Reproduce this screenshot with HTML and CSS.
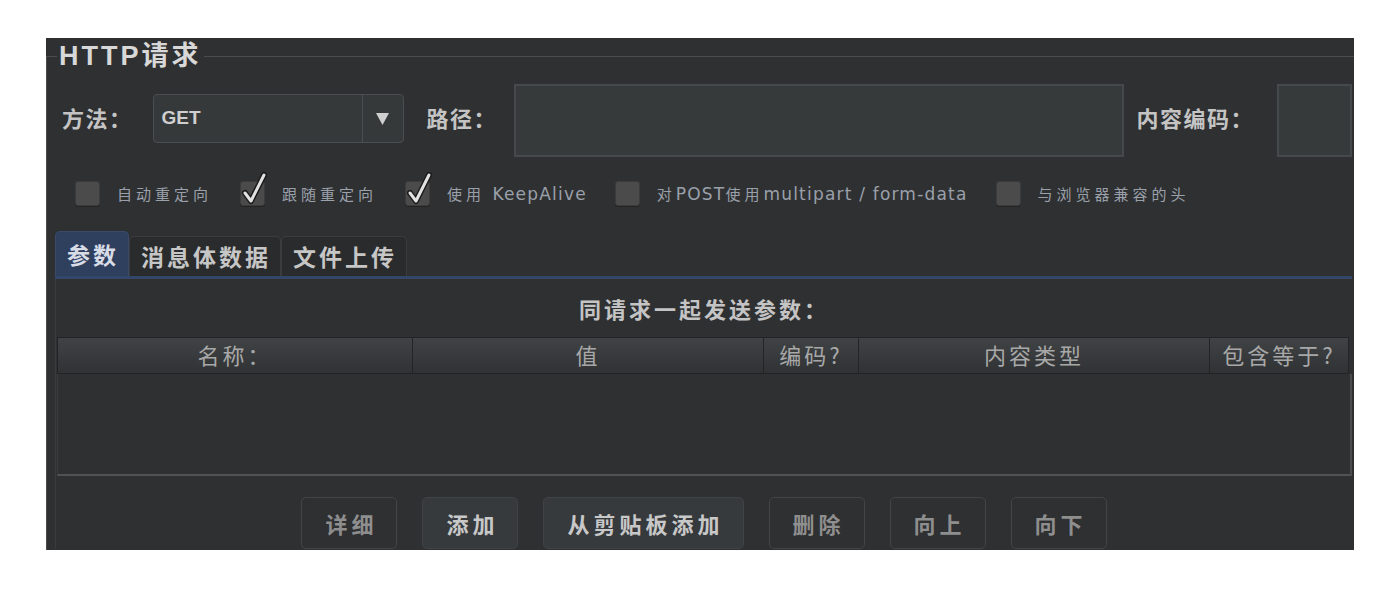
FILE: index.html
```html
<!DOCTYPE html>
<html lang="zh-CN">
<head>
<meta charset="utf-8">
<title>HTTP请求</title>
<link rel="stylesheet" href="styles.css">
</head>
<body>
<div class="page">
  <div class="panel">
    <fieldset class="group">
      <legend class="group-title">HTTP请求</legend>
      <div class="row-top">
        <span class="lbl">方法：</span>
        <div class="combo">
          <span class="combo-val">GET</span>
          <span class="combo-btn"><svg width="13" height="12" viewBox="0 0 13 12"><path d="M0 0 H13 L6.5 12 Z" fill="#cfcfcf"/></svg></span>
        </div>
        <span class="lbl lbl-path">路径：</span>
        <div class="field field-path"></div>
        <span class="lbl lbl-enc">内容编码：</span>
        <div class="field field-enc"></div>
      </div>
      <div class="row-checks">
        <label class="chk"><span class="box"></span><span class="chk-txt">自动重定向</span></label>
        <label class="chk"><span class="box"><svg width="30" height="36" viewBox="0 0 30 36"><path d="M6 22 L12 30 L25 4" fill="none" stroke="#1b1b1b" stroke-width="6" stroke-linecap="round" stroke-linejoin="round"/><path d="M6 22 L12 30 L25 4" fill="none" stroke="#e2e2e2" stroke-width="3" stroke-linecap="round" stroke-linejoin="round"/></svg></span><span class="chk-txt">跟随重定向</span></label>
        <label class="chk"><span class="box"><svg width="30" height="36" viewBox="0 0 30 36"><path d="M6 22 L12 30 L25 4" fill="none" stroke="#1b1b1b" stroke-width="6" stroke-linecap="round" stroke-linejoin="round"/><path d="M6 22 L12 30 L25 4" fill="none" stroke="#e2e2e2" stroke-width="3" stroke-linecap="round" stroke-linejoin="round"/></svg></span><span class="chk-txt">使用 <span class="en">KeepAlive</span></span></label>
        <label class="chk"><span class="box"></span><span class="chk-txt">对<span class="en">POST</span>使用<span class="en">multipart / form-data</span></span></label>
        <label class="chk"><span class="box"></span><span class="chk-txt">与浏览器兼容的头</span></label>
      </div>
      <div class="tabs">
        <div class="tab on">参数</div>
        <div class="tab">消息体数据</div>
        <div class="tab">文件上传</div>
      </div>
      <div class="tab-body">
        <div class="params-title">同请求一起发送参数：</div>
        <div class="table">
          <div class="thead">
            <div class="th">名称：</div>
            <div class="th">值</div>
            <div class="th">编码?</div>
            <div class="th">内容类型</div>
            <div class="th">包含等于?</div>
          </div>
          <div class="tbody"></div>
        </div>
        <div class="buttons">
          <div class="btn">详细</div>
          <div class="btn on">添加</div>
          <div class="btn on">从剪贴板添加</div>
          <div class="btn">删除</div>
          <div class="btn">向上</div>
          <div class="btn">向下</div>
        </div>
      </div>
    </fieldset>
  </div>
</div>
</body>
</html>
```

FILE: styles.css
```css
body {
  margin: 0;
  background: #ffffff;
  font-family: "Noto Sans CJK SC", sans-serif;
}

.page {
  padding: 38px 0 0 46px;
}

.panel {
  width: 1308px;
  height: 512px;
  background: #2f3032;
  overflow: hidden;
}

.group {
  margin: 0;
  min-width: 0;
  height: 100%;
  box-sizing: border-box;
  border: 0;
  border-top: 1px solid #4a4c4e;
  border-left: 1px solid #4a4c4e;
  padding: 0 2px 0 8px;
}

.group-title {
  padding: 0 2px;
  margin-left: 2px;
  font: bold 27px/36px "Liberation Sans", "Noto Sans CJK SC", sans-serif;
  letter-spacing: 3px;
  color: #d8d8d8;
}

/* top row */
.row-top {
  display: flex;
  align-items: center;
  height: 73px;
  margin-top: 10px;
  padding-left: 7px;
}

.lbl {
  margin-bottom: 8px;
  font-size: 22px;
  font-weight: bold;
  color: #c4c4c4;
  letter-spacing: 1.5px;
  white-space: nowrap;
}

.combo {
  margin-left: 20px;
  margin-bottom: 4px;
  width: 251px;
  height: 49px;
  box-sizing: border-box;
  border: 1px solid #4b4e50;
  border-radius: 4px;
  background: #35393a;
  display: flex;
}

.combo-val {
  flex: 1;
  padding-left: 8px;
  font: bold 19px/45px "Liberation Sans", sans-serif;
  color: #cfcfcf;
}

.combo-btn {
  width: 40px;
  border-left: 1px solid #4b4e50;
  display: flex;
  align-items: center;
  justify-content: center;
}

.lbl-path {
  margin-left: 23px;
}

.field {
  height: 73px;
  box-sizing: border-box;
  border: 2px solid #46494b;
  background: #363a3b;
}

.field-path {
  flex: 1;
  margin-left: 17px;
}

.lbl-enc {
  margin-left: 12px;
}

.field-enc {
  width: 75px;
  margin-left: 23px;
}

/* checkboxes */
.row-checks {
  display: flex;
  align-items: center;
  height: 27px;
  margin-top: 23px;
  padding-left: 20px;
}

.chk {
  display: flex;
  align-items: center;
  margin-right: 28px;
}

.box {
  position: relative;
  width: 25px;
  height: 25px;
  box-sizing: border-box;
  background: #4b4b4b;
  border: 1px solid #3c3c3c;
  border-radius: 3px;
  box-shadow: 0 1px 0 #232323;
}

.box svg {
  position: absolute;
  left: -2px;
  top: -11px;
}

.chk-txt {
  margin-left: 17px;
  font-size: 15px;
  letter-spacing: 4px;
  color: #9aa0aa;
  white-space: nowrap;
}

.en {
  font-family: "DejaVu Sans", sans-serif;
  font-size: 17px;
  letter-spacing: 1.2px;
}

/* tabs */
.tabs {
  display: flex;
  align-items: flex-end;
  height: 45px;
  margin-top: 24px;
  border-bottom: 3px solid #34466a;
}

.tab {
  height: 40px;
  box-sizing: border-box;
  padding: 0 9px 0 11px;
  font-size: 23px;
  font-weight: bold;
  letter-spacing: 3px;
  line-height: 38px;
  color: #c6c6c6;
  background: #2a2b2d;
  border: 1px solid #3b3c3e;
  border-bottom: 0;
  border-radius: 5px 5px 0 0;
}

.tab.on {
  height: 45px;
  line-height: 44px;
  background: #2f3f5e;
  border-color: #3a4a68;
  color: #d7dce6;
}

/* tab body */
.tab-body {
  border-left: 1px solid #3a3b3d;
}

.params-title {
  height: 58px;
  display: flex;
  align-items: center;
  justify-content: center;
  font-size: 22px;
  font-weight: bold;
  letter-spacing: 3px;
  color: #c4c4c4;
}

.table {
  margin-left: 1px;
}

.thead {
  display: grid;
  grid-template-columns: 354px 351px 95px 351px 1fr;
  height: 37px;
  margin-right: 3px;
  box-sizing: border-box;
  background: linear-gradient(#404345, #303234);
  border: 1px solid #222324;
}

.th {
  display: flex;
  align-items: center;
  justify-content: center;
  padding-bottom: 3px;
  font-size: 22px;
  letter-spacing: 3px;
  color: #a8a8a8;
  border-left: 1px solid #232425;
  white-space: nowrap;
}

.th:first-child {
  border-left: 0;
}

.tbody {
  height: 102px;
  box-sizing: border-box;
  border-left: 1px solid #3a3c3e;
  border-right: 2px solid #4a4c4e;
  border-bottom: 2px solid #505254;
}

/* buttons */
.buttons {
  display: flex;
  justify-content: center;
  gap: 25px;
  margin-top: 21px;
}

.btn {
  height: 52px;
  box-sizing: border-box;
  padding: 0 19px 0 23px;
  display: flex;
  align-items: center;
  border: 1px solid #424446;
  border-radius: 5px;
  background: #2f3032;
  font-size: 22px;
  font-weight: bold;
  letter-spacing: 4px;
  color: #8e8e8e;
}

.btn.on {
  background: #363a3c;
  border-color: #3f4345;
  color: #c8c8c8;
}
```
